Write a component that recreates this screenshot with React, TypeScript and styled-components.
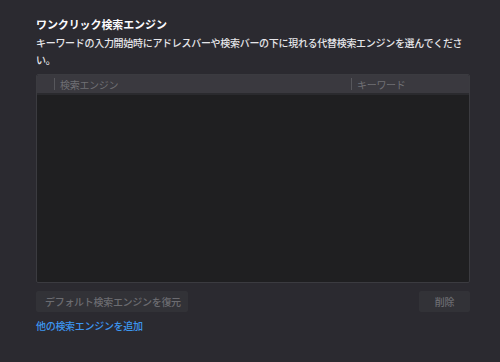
import React from "react";
import styled, { createGlobalStyle } from "styled-components";

const Global = createGlobalStyle`
  html, body {
    margin: 0;
    padding: 0;
    background: #2b2a30;
    width: 500px;
    height: 362px;
    overflow: hidden;
  }
  body {
    font-family: "Noto Sans CJK JP", "Noto Sans", sans-serif;
  }
`;

const Page = styled.div`
  box-sizing: border-box;
  width: 500px;
  height: 362px;
  padding: 16px 30px 0 36px;
  display: flex;
  flex-direction: column;
`;

const Title = styled.h2`
  margin: 0;
  font-size: 11px;
  line-height: 16px;
  font-weight: 700;
  color: #fbfbfe;
  letter-spacing: -0.1px;
`;

const Description = styled.p`
  margin: 2px 0 0;
  font-size: 10px;
  line-height: 17px;
  font-weight: 500;
  color: #e6e6ea;
  letter-spacing: -0.3px;
  width: 434px;
`;

const Table = styled.div`
  margin-top: 6px;
  width: 434px;
  height: 209px;
  box-sizing: border-box;
  border: 1px solid #3b3b40;
  border-radius: 2px;
  background: #1f1f21;
  display: flex;
  flex-direction: column;
  overflow: hidden;
`;

const HeaderRow = styled.div`
  height: 18px;
  background: #3a393f;
  border-bottom: 2px solid #2a2a2e;
  display: grid;
  grid-template-columns: 17px 297px 1fr;
  align-items: center;
`;

const HeaderCell = styled.div`
  height: 100%;
  display: flex;
  align-items: center;
  font-size: 10px;
  color: #707075;
  letter-spacing: -0.3px;
  padding-left: 6px;
  position: relative;
  &::before {
    content: "";
    position: absolute;
    left: 0;
    top: 3px;
    bottom: 3px;
    width: 1px;
    background: #57575c;
  }
`;

const Spacer = styled.div``;

const TableBody = styled.div`
  flex: 1;
`;

const ButtonRow = styled.div`
  margin-top: 8px;
  width: 434px;
  display: flex;
  justify-content: space-between;
`;

const Button = styled.button<{ $wide?: boolean }>`
  height: 21px;
  box-sizing: border-box;
  border: none;
  border-radius: 2px;
  background: #323237;
  color: #6c6c71;
  font-family: inherit;
  font-size: 10px;
  font-weight: 500;
  letter-spacing: -0.3px;
  padding: ${(p) => (p.$wide ? "0 7px 0 9px" : "0")};
  width: ${(p) => (p.$wide ? "152px" : "51px")};
  text-align: ${(p) => (p.$wide ? "left" : "center")};
  line-height: 21px;
  cursor: default;
`;

const Link = styled.a`
  margin-top: 6px;
  align-self: flex-start;
  font-size: 10px;
  line-height: 16px;
  font-weight: 500;
  letter-spacing: -0.3px;
  color: #3d96f0;
  text-decoration: none;
  cursor: pointer;
`;

export default function App() {
  return (
    <>
      <Global />
      <Page>
        <Title>ワンクリック検索エンジン</Title>
        <Description>
          キーワードの入力開始時にアドレスバーや検索バーの下に現れる代替検索エンジンを選んでください。
        </Description>
        <Table>
          <HeaderRow>
            <Spacer />
            <HeaderCell>検索エンジン</HeaderCell>
            <HeaderCell>キーワード</HeaderCell>
          </HeaderRow>
          <TableBody />
        </Table>
        <ButtonRow>
          <Button $wide>デフォルト検索エンジンを復元</Button>
          <Button>削除</Button>
        </ButtonRow>
        <Link>他の検索エンジンを追加</Link>
      </Page>
    </>
  );
}
